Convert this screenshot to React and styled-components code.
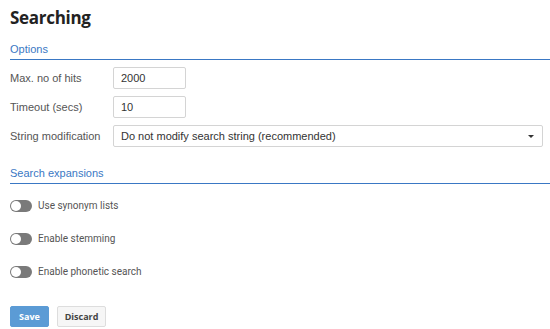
import styled, { createGlobalStyle } from "styled-components";

const GlobalStyle = createGlobalStyle`
  body {
    margin: 0;
    background: #fff;
    font-family: "Liberation Sans", Arial, sans-serif;
  }
`;

const options = [
  { label: "Max. no of hits", value: "2000" },
  { label: "Timeout (secs)", value: "10" },
];

const expansions = ["Use synonym lists", "Enable stemming", "Enable phonetic search"];

export default function App() {
  return (
    <>
      <GlobalStyle />
      <Page>
        <Title>Searching</Title>
        <Section $top={12}>
          <SectionHead>Options</SectionHead>
          <Form>
            {options.map((o) => (
              <Row key={o.label}>
                <Label>{o.label}</Label>
                <Input defaultValue={o.value} />
              </Row>
            ))}
            <Row>
              <Label>String modification</Label>
              <Select>
                <span>Do not modify search string (recommended)</span>
                <Caret />
              </Select>
            </Row>
          </Form>
        </Section>
        <Section $top={19}>
          <SectionHead>Search expansions</SectionHead>
          <Toggles>
            {expansions.map((t) => (
              <ToggleRow key={t}>
                <Switch />
                <ToggleLabel>{t}</ToggleLabel>
              </ToggleRow>
            ))}
          </Toggles>
        </Section>
        <Buttons>
          <Button $primary $w={39}>Save</Button>
          <Button $w={49}>Discard</Button>
        </Buttons>
      </Page>
    </>
  );
}

const Page = styled.div`
  padding: 6px 0 0 10px;
`;
const Title = styled.h1`
  margin: 0;
  font-family: "Open Sans", sans-serif;
  font-weight: 700;
  font-size: 17px;
  letter-spacing: -0.3px;
  line-height: 24px;
  color: #222;
`;
const Section = styled.section`
  margin-top: ${(p) => p.$top}px;
`;
const SectionHead = styled.div`
  font-size: 11px;
  line-height: 15px;
  color: #3a78c4;
  padding-bottom: 2px;
  border-bottom: 1px solid #3a78c4;
`;
const Form = styled.div`
  display: flex;
  flex-direction: column;
  gap: 7px;
  padding: 7px 7px 0 0;
`;
const Row = styled.div`
  display: flex;
  align-items: center;
`;
const Label = styled.div`
  width: 103px;
  font-size: 11px;
  color: #555;
`;
const Input = styled.input`
  box-sizing: border-box;
  width: 73px;
  height: 22px;
  padding: 0 7px;
  border: 1px solid #d4d4d4;
  border-radius: 2px;
  font-family: "Liberation Sans", Arial, sans-serif;
  font-size: 11px;
  color: #333;
  outline: none;
`;
const Select = styled.div`
  box-sizing: border-box;
  flex: 1;
  height: 22px;
  padding: 0 8px 0 7px;
  border: 1px solid #d4d4d4;
  border-radius: 2px;
  display: flex;
  align-items: center;
  justify-content: space-between;
  font-size: 11px;
  color: #333;
`;
const Caret = styled.span`
  width: 0;
  height: 0;
  border-left: 3px solid transparent;
  border-right: 3px solid transparent;
  border-top: 3px solid #333;
`;
const Toggles = styled.div`
  display: flex;
  flex-direction: column;
  gap: 19px;
  padding-top: 15px;
`;
const ToggleRow = styled.div`
  display: flex;
  align-items: center;
  gap: 6px;
`;
const Switch = styled.span`
  position: relative;
  width: 22px;
  height: 12px;
  border-radius: 6px;
  background: #7a7a7a;
  &::after {
    content: "";
    position: absolute;
    left: 1px;
    top: 1px;
    width: 10px;
    height: 10px;
    border-radius: 50%;
    background: #fff;
  }
`;
const ToggleLabel = styled.span`
  font-family: Roboto, sans-serif;
  font-size: 10px;
  color: #555;
  line-height: 14px;
`;
const Buttons = styled.div`
  display: flex;
  gap: 8px;
  margin-top: 27px;
`;
const Button = styled.button`
  box-sizing: border-box;
  width: ${(p) => p.$w}px;
  height: 21px;
  padding: 0;
  border: 1px solid ${(p) => (p.$primary ? "#5b9bd5" : "#ddd")};
  border-radius: 2px;
  background: ${(p) => (p.$primary ? "#5b9bd5" : "#f6f6f6")};
  color: ${(p) => (p.$primary ? "#fff" : "#444")};
  font-family: "Open Sans", sans-serif;
  font-weight: 700;
  font-size: 9px;
`;
